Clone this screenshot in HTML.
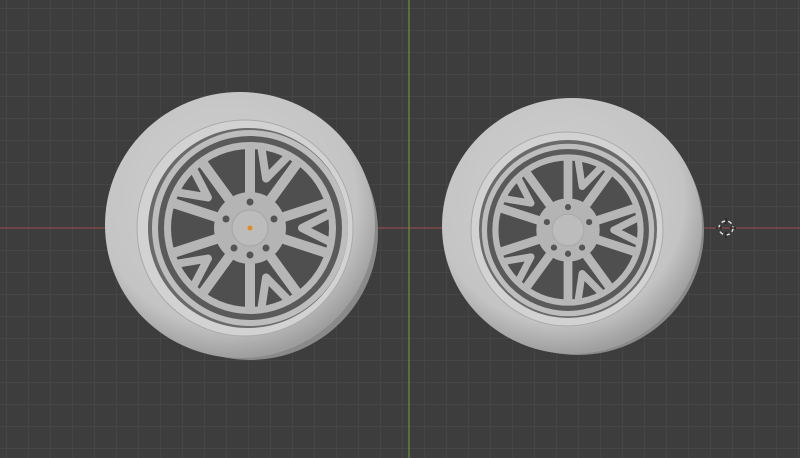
<!DOCTYPE html>
<html><head><style>body{margin:0;background:#3d3d3d}svg{display:block}</style></head><body>
<svg width="800" height="458" viewBox="0 0 800 458" xmlns="http://www.w3.org/2000/svg">
<defs>
<pattern id="g" width="22" height="22" patternUnits="userSpaceOnUse" x="6" y="8">
<path d="M0 0H22M0 0V22" stroke="#4a4a4a" stroke-width="1.2" fill="none"/>
</pattern>
<radialGradient id="tire" cx="0.45" cy="0.4" r="0.6"><stop offset="0" stop-color="#d0d0d0"/><stop offset="0.8" stop-color="#c4c4c4"/><stop offset="1" stop-color="#9e9e9e"/></radialGradient>
<g id="rim">
<circle r="98" fill="#bdbdbd"/>
<circle r="92" fill="#5a5a5a"/>
<circle r="86" fill="#b8b8b8"/>
<circle r="79" fill="#4f4f4f"/>
<g stroke="#b6b6b6" stroke-width="10" stroke-linecap="round">
<line x1="0" y1="-30" x2="0" y2="-80" transform="rotate(0)"/>
<line x1="0" y1="-30" x2="0" y2="-80" transform="rotate(36)"/>
<line x1="0" y1="-30" x2="0" y2="-80" transform="rotate(72)"/>
<line x1="0" y1="-30" x2="0" y2="-80" transform="rotate(108)"/>
<line x1="0" y1="-30" x2="0" y2="-80" transform="rotate(144)"/>
<line x1="0" y1="-30" x2="0" y2="-80" transform="rotate(180)"/>
<line x1="0" y1="-30" x2="0" y2="-80" transform="rotate(216)"/>
<line x1="0" y1="-30" x2="0" y2="-80" transform="rotate(252)"/>
<line x1="0" y1="-30" x2="0" y2="-80" transform="rotate(288)"/>
<line x1="0" y1="-30" x2="0" y2="-80" transform="rotate(324)"/>
</g>
<g stroke="#b6b6b6" stroke-width="8" stroke-linecap="round">
<path d="M0 -52 L-13 -78 M0 -52 L13 -78" transform="rotate(18)"/>
<path d="M0 -52 L-13 -78 M0 -52 L13 -78" transform="rotate(90)"/>
<path d="M0 -52 L-13 -78 M0 -52 L13 -78" transform="rotate(162)"/>
<path d="M0 -52 L-13 -78 M0 -52 L13 -78" transform="rotate(234)"/>
<path d="M0 -52 L-13 -78 M0 -52 L13 -78" transform="rotate(306)"/>
</g>
<circle r="36" fill="#b4b4b4"/>
<circle r="18" fill="#bcbcbc" stroke="#a6a6a6"/>
<g fill="#555"><circle cx="0" cy="-26" r="3.5"/><circle cx="24" cy="-9" r="3.5"/><circle cx="16" cy="20" r="3.5"/><circle cx="-16" cy="20" r="3.5"/><circle cx="-24" cy="-9" r="3.5"/><circle cx="0" cy="27" r="3.5"/></g>
</g>
</defs>
<rect width="800" height="458" fill="#3d3d3d"/>
<rect width="800" height="458" fill="url(#g)"/>
<line x1="0" y1="228" x2="800" y2="228" stroke="#8a4a50" stroke-width="1.3"/>
<line x1="409" y1="0" x2="409" y2="458" stroke="#6a8a3a" stroke-width="1.3"/>
<!-- wheel 1 -->
<ellipse cx="250" cy="232" rx="128" ry="128" fill="#8a8a8a"/>
<ellipse cx="240" cy="225" rx="135" ry="133" fill="url(#tire)"/>
<ellipse cx="245" cy="228" rx="108" ry="108" fill="#d2d2d2" stroke="#aaa"/>
<ellipse cx="248" cy="228" rx="100" ry="100" fill="#6a6a6a"/>
<g transform="translate(250,228)"><use href="#rim"/></g>
<circle cx="250" cy="228" r="2.5" fill="#e08a20"/>
<!-- wheel 2 -->
<ellipse cx="578" cy="230" rx="126" ry="125" fill="#8a8a8a"/>
<ellipse cx="572" cy="226" rx="130" ry="128" fill="url(#tire)"/>
<ellipse cx="567" cy="229" rx="96" ry="97" fill="#d2d2d2" stroke="#aaa"/>
<ellipse cx="568" cy="229" rx="89" ry="89" fill="#6a6a6a"/>
<g transform="translate(568,230) scale(0.88)"><use href="#rim"/></g>
<circle cx="726" cy="228" r="7" fill="none" stroke="#ddd" stroke-width="1.5" stroke-dasharray="4 3"/>
<path d="M716 228h6M730 228h6M726 218v6M726 232v6" stroke="#222" stroke-width="1.2"/>
</svg>
</body></html>
